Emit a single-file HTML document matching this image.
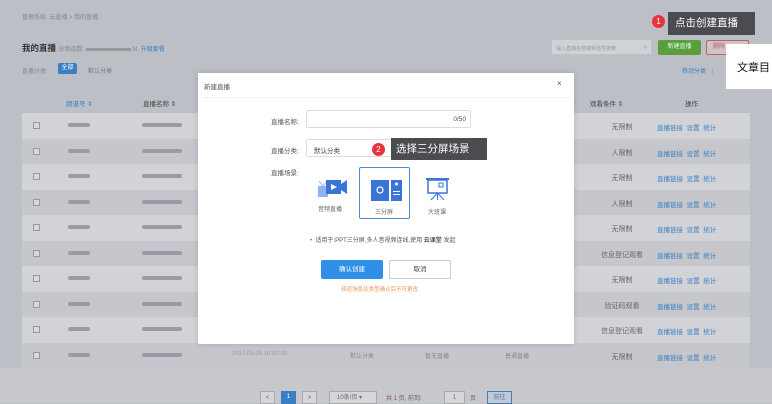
<!DOCTYPE html>
<html><head><meta charset="utf-8"><style>
*{margin:0;padding:0;box-sizing:border-box}
body{width:772px;height:403px;overflow:hidden;background:#bcbfc6;font-family:"Liberation Sans","Noto Sans CJK SC",sans-serif;font-size:7px;color:#666;position:relative}
.a{position:absolute}
.row{position:absolute;left:22px;width:728px;height:25.5px}
.cb{position:absolute;left:11px;top:9px;width:7px;height:7px;border:1px solid #999;background:#d8d9dd}
.bl{color:#3a7fc4}
.ops{position:absolute;left:635px;top:9px;font-size:6.5px}
.cond{position:absolute;left:570px;top:9px;width:60px;text-align:center}
.blur{position:absolute;height:4px;background:#9a9ca3;border-radius:2px}
</style></head><body>
<div class="a" style="left:22px;top:12px;font-size:6px;color:#888">管理系统: 云直播 &gt; 我的直播</div>
<div class="a" style="left:22px;top:42px;font-size:8.5px;color:#333;font-weight:bold">我的直播 <span style="font-size:6px;color:#888;font-weight:normal">总频道数: <span style="display:inline-block;width:45px;height:3px;background:#999"></span> M. <span class="bl">升级套餐</span></span></div>
<div class="a" style="left:22px;top:66px;font-size:6px;color:#888">直播分类:</div>
<div class="a" style="left:58px;top:63px;width:19px;height:11px;background:#3a7fc4;border-radius:2px;color:#fff;font-size:6px;text-align:center;line-height:11px">全部</div>
<div class="a" style="left:88px;top:66px;font-size:6px;color:#777">默认分类</div>
<div class="a" style="left:551px;top:39px;width:101px;height:16px;background:#d0d2d6;border:1px solid #c0c2c7;border-radius:2px;font-size:5px;color:#999;padding:5px 4px">输入直播名称或频道号搜索<span style="float:right">⚲</span></div>
<div class="a" style="left:658px;top:40px;width:43px;height:15px;background:#5c9e3b;color:#dfe;font-size:6px;text-align:center;line-height:15px;border-radius:2px">新建直播</div>
<div class="a" style="left:706px;top:40px;width:43px;height:15px;border:1px solid #c85c5c;color:#c55;font-size:6px;line-height:13px;padding-left:6px;border-radius:2px;background:#cbc5c8">删除</div>
<div class="a" style="left:682px;top:66px;font-size:6px" ><span class="bl">移动分类</span> <span style="color:#999;margin-left:4px">|</span></div>
<div class="a" style="left:726px;top:44px;width:50px;height:45px;background:#fff;font-size:11px;color:#111;padding:15px 0 0 11px;white-space:nowrap;overflow:hidden">文章目</div>
<div class="a bl" style="left:66px;top:98px;font-size:6.5px">频道号 ⇕</div>
<div class="a" style="left:143px;top:98px;font-size:6.5px;color:#444">直播名称 ⇕</div>
<div class="a" style="left:590px;top:98px;font-size:6.5px;color:#444">观看条件 ⇕</div>
<div class="a" style="left:685px;top:98px;font-size:6.5px;color:#444">操作</div>
<div id="rows"></div>
<script>
var c=["无限制","人限制","无限制","人限制","无限制","信息登记观看","无限制","验证码观看","信息登记观看","无限制"];
var h="";for(var i=0;i<10;i++){var t=113+i*25.5;h+='<div class="row" style="top:'+t+'px;background:'+(i%2?'#c5c7cc':'#d2d3d7')+'"><div class="cb"></div><div class="blur" style="left:46px;top:10px;width:22px"></div><div class="blur" style="left:120px;top:10px;width:40px"></div><div class="cond">'+c[i]+'</div><div class="ops"><span class="bl">直播链接</span>&nbsp; <span class="bl">设置</span>&nbsp; <span class="bl">统计</span></div></div>';}
document.getElementById('rows').innerHTML=h;
</script>
<div class="a" style="left:232px;top:351px;font-size:6px;color:#999">2017.05.09 10:00:00</div>
<div class="a" style="left:350px;top:351px;font-size:6px;color:#888">默认分类</div>
<div class="a" style="left:425px;top:351px;font-size:6px;color:#888">暂无直播</div>
<div class="a" style="left:505px;top:351px;font-size:6px;color:#888">普通直播</div>
<div class="a" style="left:0;top:368px;width:772px;height:35px;background:#c6c8cc"></div>
<div class="a" style="left:260px;top:391px;width:15px;height:13px;border:1px solid #aaa;background:#d6d7da;text-align:center;font-size:6px;line-height:12px">&lt;</div>
<div class="a" style="left:281px;top:391px;width:15px;height:13px;background:#3a7fc4;color:#fff;text-align:center;font-size:6px;line-height:13px">1</div>
<div class="a" style="left:302px;top:391px;width:15px;height:13px;border:1px solid #aaa;background:#d6d7da;text-align:center;font-size:6px;line-height:12px">&gt;</div>
<div class="a" style="left:329px;top:391px;width:48px;height:13px;border:1px solid #aaa;background:#d6d7da;font-size:6px;line-height:12px;padding-left:7px">10条/页 ▾</div>
<div class="a" style="left:386px;top:393px;font-size:6px">共 <span style="color:#c33">1</span> 页, 前到:</div>
<div class="a" style="left:444px;top:391px;width:21px;height:13px;border:1px solid #aaa;background:#d6d7da;text-align:center;font-size:6px;line-height:12px">1</div>
<div class="a" style="left:470px;top:393px;font-size:6px">页</div>
<div class="a bl" style="left:487px;top:391px;width:25px;height:13px;border:1px solid #3a7fc4;text-align:center;font-size:6px;line-height:12px">前往</div>

<div class="a" style="left:198px;top:73px;width:376px;height:271px;background:#fff;box-shadow:0 0 6px rgba(0,0,0,.15)">
<div class="a" style="left:6px;top:8px;font-size:6.5px;color:#555">新建直播</div>
<div class="a" style="left:359px;top:6px;font-size:8px;color:#555">×</div>
<div class="a" style="left:4px;top:24px;width:368px;height:1px;background:#eee"></div>
<div class="a" style="left:73px;top:43px;font-size:6.5px;color:#555">直播名称:</div>
<div class="a" style="left:108px;top:37px;width:165px;height:18px;border:1px solid #ddd;border-radius:2px;font-size:6.5px;text-align:right;padding:5px 4px;color:#555">0/50</div>
<div class="a" style="left:73px;top:72px;font-size:6.5px;color:#555">直播分类:</div>
<div class="a" style="left:108px;top:66px;width:165px;height:18px;border:1px solid #ddd;border-radius:2px;font-size:6.5px;padding:5px 7px;color:#444">默认分类</div>
<div class="a" style="left:73px;top:94px;font-size:6.5px;color:#555">直播场景:</div>
<svg class="a" style="left:120px;top:105px" width="30" height="20"><rect x="0" y="8" width="10" height="11" fill="#8fb3ec"/><path d="M1 3 L5 8 L9 3" stroke="#8fb3ec" fill="none"/><rect x="8" y="2" width="15" height="14" fill="#3b74d8"/><path d="M23 6 L29 2 L29 16 L23 12Z" fill="#3b74d8"/><path d="M13 6 L19 9 L13 12Z" fill="#fff"/></svg>
<div class="a" style="left:120px;top:131px;font-size:6px;color:#666">音频直播</div>
<div class="a" style="left:161px;top:94px;width:51px;height:52px;border:1px solid #4a8ad8;border-radius:2px"></div>
<svg class="a" style="left:173px;top:107px" width="32" height="21"><rect x="0" y="0" width="18" height="21" fill="#3b74d8"/><circle cx="9" cy="10" r="3" fill="none" stroke="#fff" stroke-width="1.2"/><rect x="20" y="0" width="11" height="21" fill="#3b74d8"/><circle cx="25.5" cy="4" r="1.5" fill="#fff"/><rect x="22" y="11" width="7" height="1" fill="#fff"/><rect x="22" y="14" width="7" height="1" fill="#fff"/></svg>
<div class="a" style="left:177px;top:134px;font-size:6px;color:#666">三分屏</div>
<svg class="a" style="left:228px;top:104px" width="24" height="24"><rect x="0" y="1" width="23" height="2" fill="#3b74d8"/><rect x="2" y="3" width="19" height="13" fill="none" stroke="#3b74d8" stroke-width="1.5"/><rect x="13" y="6" width="4" height="4" fill="none" stroke="#3b74d8"/><path d="M11.5 16 L5 23 M11.5 16 L18 23 M11.5 16 V23" stroke="#3b74d8"/></svg>
<div class="a" style="left:230px;top:134px;font-size:6px;color:#666">大班课</div>
<div class="a" style="left:112px;top:162px;font-size:6px;color:#555"><span style="color:#3a7fc4">•</span> &nbsp;适用于:PPT三分屏,多人音视频连线,使用 <b>云课堂</b> 发起</div>
<div class="a" style="left:123px;top:187px;width:62px;height:19px;background:#2f8fe6;border-radius:2px;color:#fff;font-size:6.5px;text-align:center;line-height:19px">确认创建</div>
<div class="a" style="left:191px;top:187px;width:62px;height:19px;border:1px solid #ccc;border-radius:2px;color:#444;font-size:6.5px;text-align:center;line-height:17px">取消</div>
<div class="a" style="left:143px;top:212px;font-size:5.5px;color:#f0955a">频道场景及类型确认后不可更改</div>
</div>

<div class="a" style="left:652px;top:15px;width:13px;height:13px;border-radius:50%;background:#e8343a;color:#fff;font-size:8px;text-align:center;line-height:13px">1</div>
<div class="a" style="left:668px;top:12px;width:87px;height:23px;background:#4a4c50;color:#fff;font-size:10.5px;line-height:23px;padding-left:7px">点击创建直播</div>
<div class="a" style="left:664px;top:20px;width:0;height:0;border:4px solid transparent;border-right-color:#4a4c50"></div>
<div class="a" style="left:372px;top:143px;width:13px;height:13px;border-radius:50%;background:#e8343a;color:#fff;font-size:8px;text-align:center;line-height:13px">2</div>
<div class="a" style="left:391px;top:138px;width:96px;height:22px;background:#4a4c50;color:#fff;font-size:10.5px;line-height:22px;padding-left:5px">选择三分屏场景</div>
<div class="a" style="left:387px;top:145px;width:0;height:0;border:4px solid transparent;border-right-color:#4a4c50"></div>
</body></html>
